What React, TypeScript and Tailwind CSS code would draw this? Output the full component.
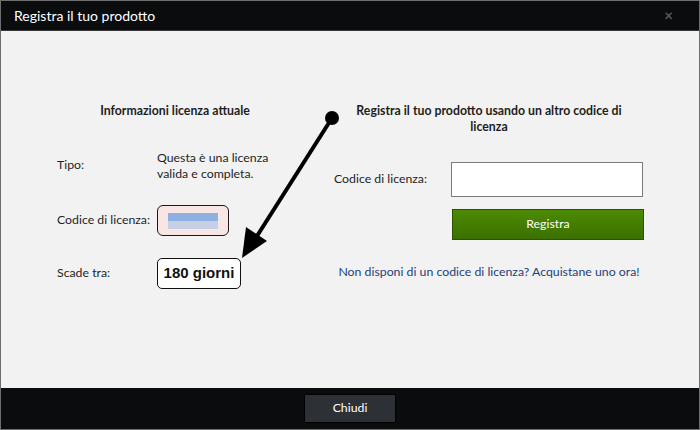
import React from "react";

// finestra di registrazione prodotto
export default function App() {
  return (
    <div
      className="w-[700px] h-[430px] bg-[#0b0c0e] border border-[#6e6e6e] flex flex-col text-[12.3px] text-[#1e1e1e]"
      style={{ fontFamily: 'Lato, "Noto Sans", sans-serif' }}
    >
      {/* barra del titolo */}
      <div className="h-[29px] shrink-0 flex items-center justify-between pl-[13px] pr-[26px] text-white">
        <span className="text-[14px]">Registra il tuo prodotto</span>
        <span className="text-[#5a5a5a] text-[15px] font-bold leading-none">×</span>
      </div>

      {/* contenuto */}
      <div className="relative h-[358px] shrink-0 bg-[#f2f2f2] border-t border-[#3a3a3a] flex pt-[72px]">
        {/* colonna sinistra */}
        <div className="ml-[56px] w-[236px] flex flex-col">
          <div className="text-center font-bold h-[16px] leading-[16px]">Informazioni licenza attuale</div>
          <div className="flex mt-[31px]">
            <div className="w-[100px] pt-[6px]">Tipo:</div>
            <div className="leading-[16px]">
              Questa è una licenza
              <br />
              valida e completa.
            </div>
          </div>
          <div className="flex items-center mt-[23px]">
            <div className="w-[100px]">Codice di licenza:</div>
            <div className="w-[72px] h-[31px] rounded-[6px] border border-[#1a1a1a] bg-[#f7e6e3] flex items-center justify-center">
              <div className="w-[50px] h-[16px] flex flex-col blur-[0.5px]">
                <div className="h-[8px] bg-[#8fb1e2]" />
                <div className="h-[8px] bg-[#c5d0e6]" />
              </div>
            </div>
          </div>
          <div className="flex items-center mt-[22px]">
            <div className="w-[100px]">Scade tra:</div>
            <div
              className="w-[84px] h-[31px] rounded-[5px] border border-[#111] bg-white flex items-center justify-center text-[15px] font-bold text-[#111]"
              style={{ fontFamily: '"Liberation Sans", Arial, sans-serif' }}
            >
              180 giorni
            </div>
          </div>
        </div>

        {/* colonna destra */}
        <div className="ml-[41px] w-[310px] flex flex-col">
          <div className="text-center font-bold leading-[16px]">
            Registra il tuo prodotto usando un altro codice di
            <br />
            licenza
          </div>
          <div className="flex items-center mt-[27px]">
            <div className="w-[117px]">Codice di licenza:</div>
            <div className="w-[192px] h-[35px] bg-white border border-[#7b7b7b]" />
          </div>
          <div className="flex mt-[12px] ml-[118px]">
            <button className="w-[192px] h-[31px] border border-[#2c5200] bg-gradient-to-b from-[#4c8b02] to-[#3b7000] text-white text-[12.3px]">
              Registra
            </button>
          </div>
          <div className="text-center text-[#1e3f78] mt-[23px] whitespace-nowrap">
            Non disponi di un codice di licenza? Acquistane uno ora!
          </div>
        </div>

        {/* freccia */}
        <svg className="absolute left-0 top-0 pointer-events-none" width="700" height="358">
          <circle cx="331" cy="87" r="7" fill="#000" />
          <line x1="331" y1="87" x2="256" y2="205" stroke="#000" strokeWidth="4" />
          <polygon points="241,227 245,196 266,210" fill="#000" />
        </svg>
      </div>

      {/* piè di pagina */}
      <div className="flex-1 flex items-center justify-center">
        <button className="w-[92px] h-[29px] bg-[#2d3135] border border-black text-white text-[12.3px]">
          Chiudi
        </button>
      </div>
    </div>
  );
}
